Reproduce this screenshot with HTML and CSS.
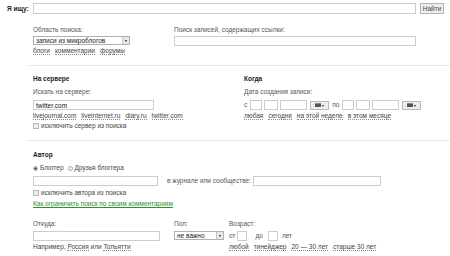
FILE: index.html
```html
<!DOCTYPE html>
<html lang="ru">
<head>
  <meta charset="UTF-8" />
  <title>Поиск по блогам</title>
  <link rel="stylesheet" href="styles.css">
</head>
<body>
  <form class="search">
    <div class="query">
      <label class="query-label" for="q">Я ищу:</label>
      <input class="field query-field" id="q" type="text">
      <button class="btn" type="button">Найти</button>
    </div>

    <div class="section scope">
      <div class="col col-scope">
        <div class="label">Область поиска:</div>
        <div class="select select-scope"><span>записи из микроблогов</span><i class="arrow"></i></div>
        <div class="links"><a>блоги</a><a>комментарии</a><a>форумы</a></div>
      </div>
      <div class="col">
        <div class="label">Поиск записей, содержащих ссылки:</div>
        <input class="field url-field" type="text">
      </div>
    </div>

    <div class="section lined">
      <div class="col col-server">
        <div class="title">На сервере</div>
        <div class="label label-gap">Искать на сервере:</div>
        <input class="field server-field" type="text" value="twitter.com">
        <div class="links"><a>livejournal.com</a><a>liveinternet.ru</a><a>diary.ru</a><a>twitter.com</a></div>
        <label class="check"><input type="checkbox"> исключить сервер из поиска</label>
      </div>
      <div class="col">
        <div class="title">Когда</div>
        <div class="label label-gap">Дата создания записи:</div>
        <div class="dates">
          <span>с</span>
          <input class="field day" type="text">
          <input class="field month" type="text">
          <input class="field year" type="text">
          <button class="cal" type="button"><i class="cal-icon"></i><i class="tri"></i></button>
          <span>по</span>
          <input class="field day" type="text">
          <input class="field month" type="text">
          <input class="field year" type="text">
          <button class="cal" type="button"><i class="cal-icon"></i><i class="tri"></i></button>
        </div>
        <div class="links"><a>любая</a><a>сегодня</a><a>на этой неделе</a><a>в этом месяце</a></div>
      </div>
    </div>

    <div class="section lined author">
      <div class="col">
        <div class="title">Автор</div>
        <div class="radios">
          <label><input type="radio" name="who" checked> Блоггер</label>
          <label><input type="radio" name="who"> Друзья блоггера</label>
        </div>
        <div class="author-row">
          <input class="field author-field" type="text">
          <span class="journal-label">в журнале или сообществе:</span>
          <input class="field journal-field" type="text">
        </div>
        <label class="check"><input type="checkbox"> исключить автора из поиска</label>
        <a class="green-link">Как ограничить поиск по своим комментариям</a>
      </div>
    </div>

    <div class="section place">
      <div class="col col-from">
        <div class="label">Откуда:</div>
        <input class="field from-field" type="text">
        <div class="hint">Например, <a>Россия</a> или <a>Тольятти</a></div>
      </div>
      <div class="col col-sex">
        <div class="label">Пол:</div>
        <div class="select select-sex"><span>не важно</span><i class="arrow"></i></div>
      </div>
      <div class="col">
        <div class="label">Возраст:</div>
        <div class="ages">
          <span>от</span>
          <input class="field age" type="text">
          <span class="age-to">до</span>
          <input class="field age" type="text">
          <span>лет</span>
        </div>
        <div class="links"><a>любой</a><a>тинейджер</a><a>20 — 30 лет</a><a>старше 30 лет</a></div>
      </div>
    </div>
  </form>
</body>
</html>
```

FILE: styles.css
```css
* { box-sizing: border-box; }
body {
  margin: 0;
  font-family: "Liberation Sans", Arial, sans-serif;
  font-size: 6.5px;
  line-height: 8px;
  color: #555;
  background: #fff;
}
.field {
  height: 10px;
  margin: 0;
  padding: 0 2px;
  border: 1px solid #cdcdcd;
  background: #fff;
  font: inherit;
  color: #111;
  display: block;
}

/* строка запроса */
.query {
  display: flex;
  align-items: center;
  padding: 3px 0 0 7px;
}
.query-label {
  width: 26px;
  font-weight: bold;
  color: #222;
}
.query-field {
  width: 383px;
  height: 11px;
}
.btn {
  margin-left: 4px;
  width: 24px;
  height: 11px;
  padding: 0;
  border: 1px solid #b5b5b5;
  background: #efefef;
  font: inherit;
  color: #445;
}

/* секции */
.section {
  display: flex;
  margin-left: 27px;
  padding-left: 6px;
}
.section.scope {
  padding-top: 12px;
  padding-bottom: 10px;
}
.section.lined {
  border-top: 1px solid #e8e8e8;
  padding-top: 9px;
  padding-bottom: 10px;
}
.section.author { padding-top: 10px; padding-bottom: 0; }
.section.place { padding-top: 12px; }

.col-scope { width: 141px; }
.col-server { width: 211px; }
.col-from { width: 141px; }
.col-sex { width: 55px; }

.title {
  font-weight: bold;
  color: #222;
}
.label-gap { margin-top: 5px; }

.select {
  display: flex;
  margin-top: 2px;
  height: 9px;
  border: 1px solid #b0b0b0;
  background: #fff;
  color: #222;
}
.select span {
  flex: 1;
  padding-left: 2px;
  line-height: 7px;
}
.select .arrow {
  width: 7px;
  border-left: 1px solid #c8c8c8;
  background: #e6e6e6;
  position: relative;
}
.select .arrow::after {
  content: "";
  position: absolute;
  left: 1.5px;
  top: 2.5px;
  border: 1.5px solid transparent;
  border-top: 2px solid #222;
}
.select-scope { width: 97px; }
.select-sex { width: 50px; }

.url-field { margin-top: 2px; width: 242px; }
.server-field { margin-top: 4px; width: 121px; }

.links {
  margin-top: 2px;
  white-space: nowrap;
}
.links a, .hint a {
  color: #444;
  text-decoration: none;
  border-bottom: 1px dotted #888;
  margin-right: 5px;
}
.hint a { margin-right: 0; }

.check {
  display: flex;
  align-items: center;
  margin-top: 2px;
  color: #444;
}
.check input, .radios input {
  appearance: none;
  margin: 0 2px 0 0;
}
.check input {
  width: 6px;
  height: 6px;
  border: 1px solid #b8b8b8;
  background: #ececec;
}

/* даты */
.dates {
  display: flex;
  align-items: center;
  gap: 2px;
  margin-top: 4px;
}
.dates span { margin-right: 1px; }
.day { width: 12px; }
.month { width: 14px; }
.year { width: 27px; }
.cal {
  display: flex;
  align-items: center;
  justify-content: center;
  gap: 1px;
  width: 19px;
  height: 9px;
  margin: 0 1px;
  padding: 0;
  border: 1px solid #b8b8b8;
  background: #eee;
}
.cal-icon {
  width: 6px;
  height: 4px;
  background: #555;
  border-top: 1px solid #888;
}
.tri {
  border: 1.5px solid transparent;
  border-top: 2px solid #333;
  margin-top: 2px;
}

/* автор */
.radios {
  display: flex;
  gap: 4px;
  margin-top: 5px;
  color: #444;
}
.radios label { display: flex; align-items: center; }
.radios input {
  width: 5px;
  height: 5px;
  border: 1px solid #aaa;
  border-radius: 50%;
  background: #f2f2f2;
}
.radios input:checked {
  background: radial-gradient(circle, #3a4a6a 45%, #f2f2f2 60%);
}
.author-row {
  display: flex;
  align-items: center;
  margin-top: 4px;
}
.author-field { width: 125px; }
.journal-label { margin: 0 2px 0 9px; }
.journal-field { width: 128px; }
.author .check { margin-top: 3px; }
.green-link {
  display: block;
  margin-top: 3px;
  color: #2f8f2f;
  text-decoration: underline;
}

/* откуда, пол, возраст */
.from-field { margin-top: 3px; width: 127px; }
.hint { margin-top: 2px; color: #444; }
.col-sex .select { margin-top: 3px; }
.ages {
  display: flex;
  align-items: center;
  margin-top: 3px;
  gap: 2px;
}
.age { width: 10px; }
.age-to { margin-left: 6px; margin-right: 3px; }
.ages span:last-child { margin-left: 2px; }
```
